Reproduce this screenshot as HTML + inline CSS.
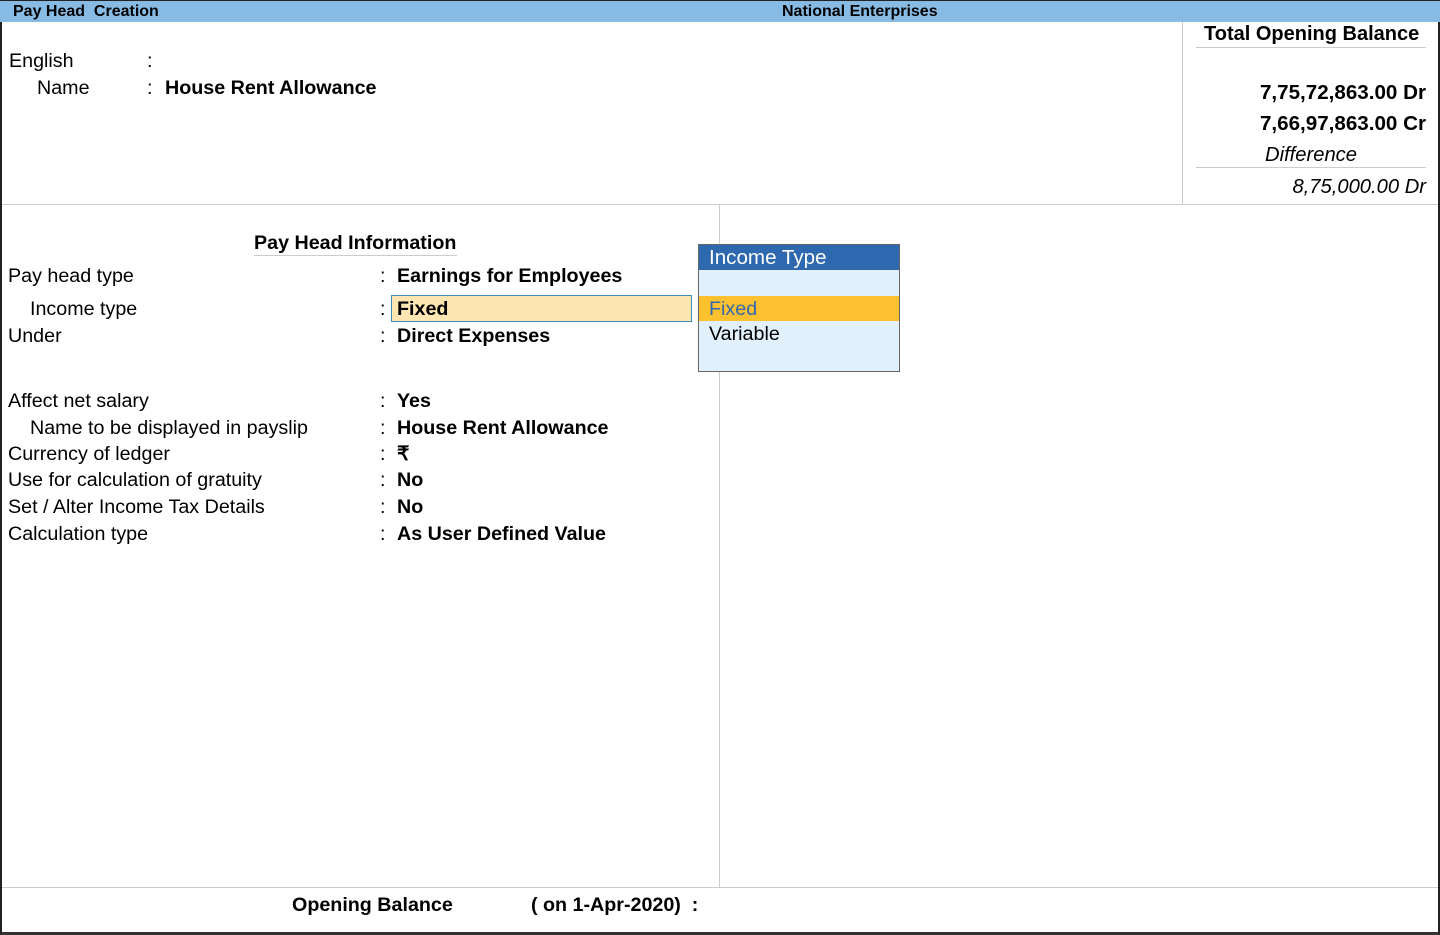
<!DOCTYPE html>
<html><head><style>
body{margin:0;width:1440px;height:935px;position:relative;overflow:hidden;background:#fff;font-family:"Liberation Sans",Arial,sans-serif;color:#000}
.a{position:absolute;white-space:nowrap}
.t{font-size:19.7px;line-height:22px}
.b{font-weight:bold}
</style></head><body>
<div class="a" style="left:0;top:0;width:1440px;height:935px;box-sizing:border-box;border:2px solid #222;border-top:none;border-bottom:3px solid #333"></div>
<div class="a" style="left:0;top:0;width:1440px;height:22px;background:#88bbe4;border-top:1px solid #222;box-sizing:border-box"></div>
<div class="a b" style="left:13px;top:3px;font-size:16px">Pay Head&nbsp; Creation</div>
<div class="a b" style="left:782px;top:3px;font-size:16px">National Enterprises</div>

<div class="a t" style="left:9px;top:50px">English</div>
<div class="a t" style="left:147px;top:50px">:</div>
<div class="a t" style="left:37px;top:77px">Name</div>
<div class="a t" style="left:147px;top:77px">:</div>
<div class="a t b" style="left:165px;top:77px">House Rent Allowance</div>

<div class="a" style="left:1182px;top:22px;width:1px;height:182px;background:#ccc"></div>
<div class="a t b" style="left:1204px;top:23px;font-size:20px">Total Opening Balance</div>
<div class="a" style="left:1196px;top:47px;width:230px;height:1px;background:#ccc"></div>
<div class="a t b" style="right:14px;top:82px;font-size:20.6px">7,75,72,863.00 Dr</div>
<div class="a t b" style="right:14px;top:113px;font-size:20.6px">7,66,97,863.00 Cr</div>
<div class="a t" style="left:1265px;top:144px;font-style:italic;font-size:20.2px">Difference</div>
<div class="a" style="left:1196px;top:167px;width:230px;height:1px;background:#ccc"></div>
<div class="a t" style="right:14px;top:176px;font-style:italic;font-size:20.2px">8,75,000.00 Dr</div>
<div class="a" style="left:2px;top:204px;width:1436px;height:1px;background:#ccc"></div>

<div class="a" style="left:719px;top:205px;width:1px;height:682px;background:#ccc"></div>
<div class="a t b" style="left:254px;top:232px">Pay Head Information</div>
<div class="a" style="left:254px;top:255px;width:203px;height:1px;background:#ccc"></div>

<div class="a t" style="left:8px;top:265px">Pay head type</div>
<div class="a t" style="left:30px;top:298px">Income type</div>
<div class="a t" style="left:8px;top:325px">Under</div>
<div class="a t" style="left:8px;top:390px">Affect net salary</div>
<div class="a t" style="left:30px;top:417px">Name to be displayed in payslip</div>
<div class="a t" style="left:8px;top:443px">Currency of ledger</div>
<div class="a t" style="left:8px;top:469px">Use for calculation of gratuity</div>
<div class="a t" style="left:8px;top:496px">Set / Alter Income Tax Details</div>
<div class="a t" style="left:8px;top:523px">Calculation type</div>

<div class="a t" style="left:380px;top:265px">:</div>
<div class="a t" style="left:380px;top:298px">:</div>
<div class="a t" style="left:380px;top:325px">:</div>
<div class="a t" style="left:380px;top:390px">:</div>
<div class="a t" style="left:380px;top:417px">:</div>
<div class="a t" style="left:380px;top:443px">:</div>
<div class="a t" style="left:380px;top:469px">:</div>
<div class="a t" style="left:380px;top:496px">:</div>
<div class="a t" style="left:380px;top:523px">:</div>

<div class="a" style="left:391px;top:295px;width:299px;height:25px;background:#fde6b2;border:1px solid #3b8fc0"></div>
<div class="a t b" style="left:397px;top:265px">Earnings for Employees</div>
<div class="a t b" style="left:397px;top:298px">Fixed</div>
<div class="a t b" style="left:397px;top:325px">Direct Expenses</div>
<div class="a t b" style="left:397px;top:390px">Yes</div>
<div class="a t b" style="left:397px;top:417px">House Rent Allowance</div>
<div class="a t b" style="left:397px;top:443px">₹</div>
<div class="a t b" style="left:397px;top:469px">No</div>
<div class="a t b" style="left:397px;top:496px">No</div>
<div class="a t b" style="left:397px;top:523px">As User Defined Value</div>

<div class="a" style="left:698px;top:244px;width:200px;height:126px;background:#e1f0fb;border:1px solid #666"></div>
<div class="a" style="left:699px;top:245px;width:200px;height:25px;background:#2e69b0"></div>
<div class="a t" style="left:709px;top:247px;color:#fff;font-size:20.6px">Income Type</div>
<div class="a" style="left:699px;top:296px;width:200px;height:25px;background:#fdc12f"></div>
<div class="a t" style="left:709px;top:298px;color:#2e69b0">Fixed</div>
<div class="a t" style="left:709px;top:323px">Variable</div>

<div class="a" style="left:2px;top:887px;width:1436px;height:1px;background:#ccc"></div>
<div class="a t b" style="left:292px;top:894px">Opening Balance</div>
<div class="a t b" style="left:531px;top:894px">( on 1-Apr-2020)&nbsp; :</div>
</body></html>
